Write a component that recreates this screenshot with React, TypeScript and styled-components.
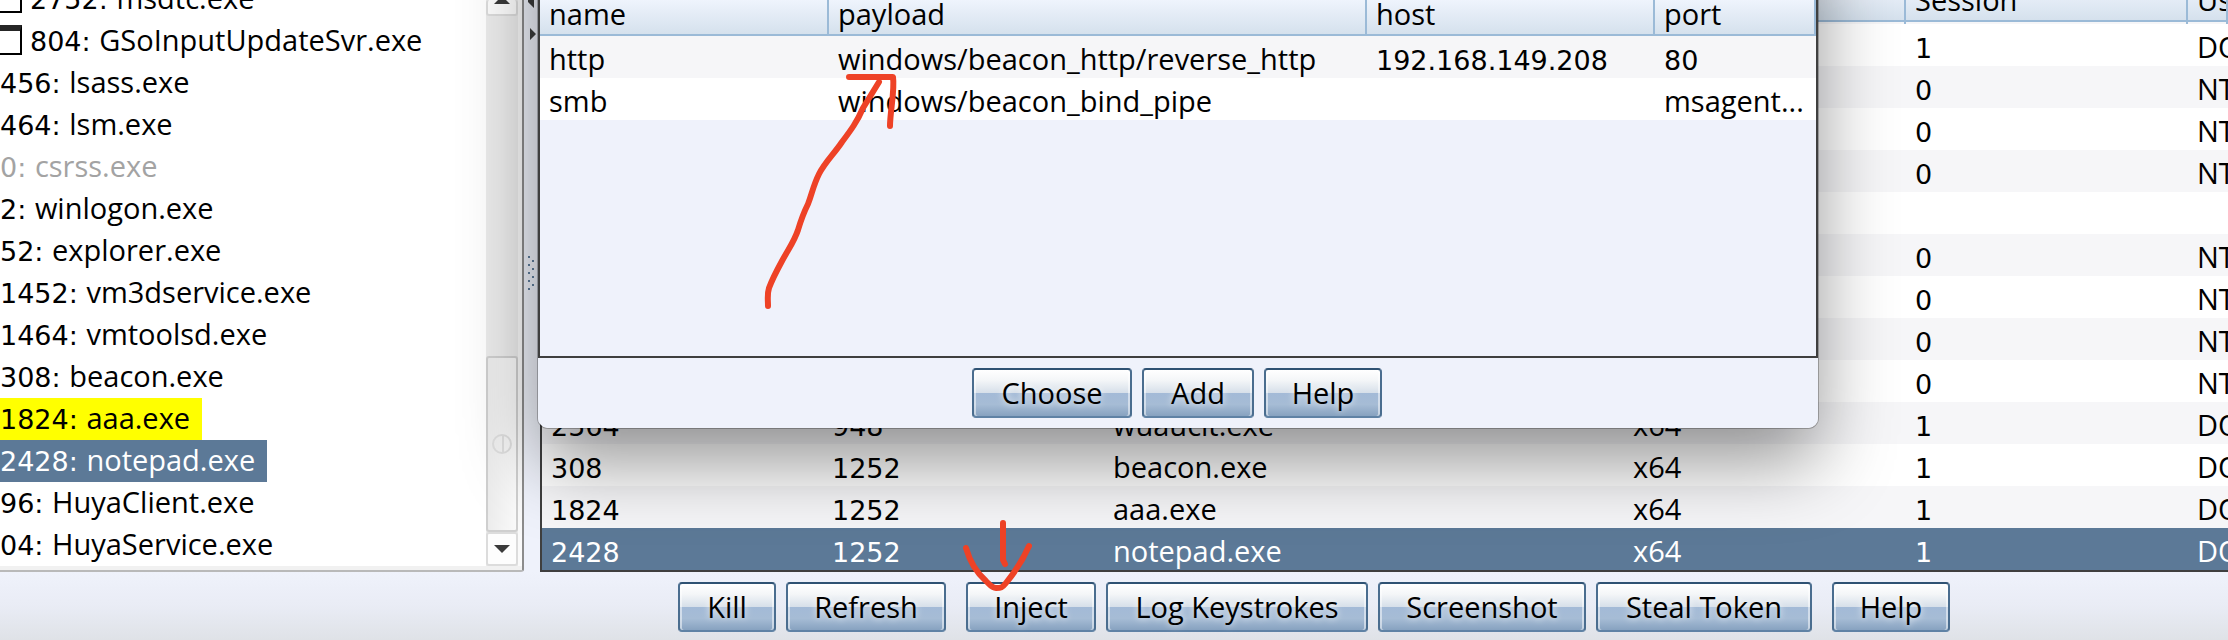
import React from "react";
import styled, { createGlobalStyle, css } from "styled-components";

const textFont = '"Open Sans", "Noto Sans", sans-serif';
const digitFont = '"DejaVu Sans", "Open Sans", sans-serif';

const GlobalStyle = createGlobalStyle`
  *, *::before, *::after { box-sizing: border-box; }
  body {
    margin: 0;
    background: #e0e3e9;
    color: #000;
    font: 29px/40px ${textFont};
    overflow: hidden;
  }
`;

const Page = styled.div`
  position: relative;
  overflow: hidden;
  display: flex;
  flex-direction: column;
  background: #eff2fb;
`;

const Workspace = styled.main`
  display: flex;
`;

/* ---------- process tree ---------- */

const TreePanel = styled.section`
  flex: none;
  width: 524px;
  display: flex;
  background: #fff;
  border-right: 2px solid #8c8c8c;
  border-bottom: 2px solid #b9b9b9;
  border-bottom-right-radius: 3px;
  overflow: hidden;
`;

const TreeList = styled.ul`
  flex: 1;
  margin: -22px 0 0;
  padding: 0;
  list-style: none;
  border-bottom: 4px solid #f1f1f1;
`;

const TreeItem = styled.li<{ $tone?: "marked" | "selected" | "muted" }>`
  display: flex;
  align-items: center;
  width: fit-content;
  height: 42px;
  padding: 0 12px 2px 0;
  white-space: pre;
  ${(p) => p.$tone === "marked" && css`background: #ffff00;`}
  ${(p) => p.$tone === "selected" && css`background: #5c7997; color: #fff;`}
  ${(p) => p.$tone === "muted" && css`color: #a3a3a3;`}
`;

const Digits = styled.span`
  font-family: ${digitFont};
  font-size: 27px;
  line-height: 1;
`;

const WindowIcon = styled.span`
  width: 22px;
  height: 30px;
  margin-right: 8px;
  background: #fff;
  border: 2px solid #000;
  border-top: 6px solid #262626;
  border-left: 0;
`;

const ScrollBar = styled.div`
  flex: none;
  width: 36px;
  display: flex;
  flex-direction: column;
  padding-right: 4px;
  border-bottom: 4px solid #f1f1f1;
  background: linear-gradient(to right, #ececec 0 32px, #fafafa 32px);
`;

const ScrollButton = styled.button<{ $end?: boolean }>`
  flex: none;
  height: ${(p) => (p.$end ? 34 : 16)}px;
  padding: 0;
  display: flex;
  justify-content: center;
  align-items: ${(p) => (p.$end ? "center" : "flex-start")};
  background: #fdfdfd;
  border: 2px solid #dcdcdc;
  border-radius: 3px;
  ${(p) => !p.$end && css`border-top: 0;`}
`;

const ScrollTrack = styled.div`
  flex: 1;
  display: flex;
  flex-direction: column;
  justify-content: flex-end;
`;

const ScrollThumb = styled.div`
  height: 176px;
  display: flex;
  align-items: center;
  justify-content: center;
  border: 2px solid #cfcfcf;
  border-radius: 3px;
  background: linear-gradient(to right, #ececec, #fafafa);
`;

/* ---------- splitter ---------- */

const Splitter = styled.div`
  flex: none;
  width: 16px;
  display: flex;
  justify-content: center;
`;

/* ---------- tables ---------- */

const ProcessPanel = styled.section`
  flex: 1;
  min-width: 0;
  overflow: hidden;
  border: solid #3f3f3f;
  border-width: 0 0 2px 2px;
`;

const Table = styled.table<{ $lift: number }>`
  width: 100%;
  margin-top: -${(p) => p.$lift}px;
  table-layout: fixed;
  border-spacing: 0;
  text-align: left;
`;

const Column = styled.col<{ $width?: number }>`
  width: ${(p) => (p.$width ? `${p.$width}px` : "auto")};
`;

const HeadCell = styled.th<{ $strip?: boolean }>`
  height: ${(p) => (p.$strip ? 44 : 42)}px;
  padding: 0 8px ${(p) => (p.$strip ? 4 : 2)}px 9px;
  font-weight: 400;
  line-height: 40px;
  white-space: nowrap;
  overflow: hidden;
  border-right: 2px solid #9bbad7;
  background: ${(p) =>
    p.$strip
      ? "linear-gradient(to top, #f6f6f8 0 2px, #9bbad7 2px 4px, #d5e1ed 4px, #f3f7ff)"
      : "linear-gradient(to top, #9bbad7 0 2px, #d5e1ed 2px, #f3f7ff)"};
`;

const Row = styled.tr<{ $shaded?: boolean; $selected?: boolean }>`
  background: ${(p) => (p.$selected ? "#5c7997" : p.$shaded ? "#f6f6f8" : "#fff")};
  color: ${(p) => (p.$selected ? "#fff" : "#000")};
`;

const Cell = styled.td`
  height: 42px;
  padding: 4px 0 0 9px;
  line-height: 38px;
  white-space: nowrap;
  overflow: hidden;
`;

/* ---------- buttons ---------- */

const Toolbar = styled.footer`
  display: flex;
  justify-content: center;
  gap: 20px;
  padding: 10px 0 8px 400px;
  background: linear-gradient(#eff2fb, #e9ecf5 50%, #dfe2e7);
`;

const ButtonGroup = styled.div`
  display: flex;
  gap: 10px;
`;

const PushButton = styled.button<{ $width: number }>`
  width: ${(p) => p.$width}px;
  height: 50px;
  padding: 0;
  font: 29px/46px ${textFont};
  color: #000;
  white-space: nowrap;
  text-shadow: 0 0 6px rgba(255, 255, 255, 0.6), 0 0 10px rgba(255, 255, 255, 0.5);
  border: 2px solid;
  border-color: #2f5273 #4a6d8f #5f82a5;
  border-radius: 4px;
  background: linear-gradient(#fff, #f4f6f8 22%, #d6dfe9 50%, #a3bad7 50%, #a6bcd5 75%, #87a2c0);
  box-shadow: inset 2px 0 rgba(255, 255, 255, 0.5), inset -2px 0 rgba(255, 255, 255, 0.5);
`;

/* ---------- listener dialog ---------- */

const Dialog = styled.div`
  position: absolute;
  top: 0;
  left: 538px;
  right: 410px;
  overflow: clip;
  border-radius: 0 0 10px 10px;
  background: #eff2fb;
`;

const DialogShade = styled.div`
  position: absolute;
  top: -100px;
  left: 538px;
  right: 410px;
  height: 528px;
  border-radius: 10px;
  box-shadow: 0 0 0 1px rgba(0, 0, 0, 0.25), 0 34px 76px rgba(0, 0, 0, 0.42);
`;

const ListenerArea = styled.div`
  min-height: 358px;
  overflow: hidden;
  border: solid #3f3f3f;
  border-width: 0 2px 2px;
`;

const DialogActions = styled.div`
  display: flex;
  justify-content: center;
  gap: 10px;
  padding: 10px 2px 10px 0;
`;

const Markup = styled.svg`
  position: absolute;
  top: 0;
  left: 0;
  pointer-events: none;
`;

type Proc = { pid: string; name: string; tone?: "marked" | "selected" | "muted"; windowed?: boolean };

const tree: Proc[] = [
  { pid: "2752", name: "msdtc.exe", windowed: true },
  { pid: "804", name: "GSoInputUpdateSvr.exe", windowed: true },
  { pid: "456", name: "lsass.exe" },
  { pid: "464", name: "lsm.exe" },
  { pid: "0", name: "csrss.exe", tone: "muted" },
  { pid: "2", name: "winlogon.exe" },
  { pid: "52", name: "explorer.exe" },
  { pid: "1452", name: "vm3dservice.exe" },
  { pid: "1464", name: "vmtoolsd.exe" },
  { pid: "308", name: "beacon.exe" },
  { pid: "1824", name: "aaa.exe", tone: "marked" },
  { pid: "2428", name: "notepad.exe", tone: "selected" },
  { pid: "96", name: "HuyaClient.exe" },
  { pid: "04", name: "HuyaService.exe" },
];

const processes: string[][] = [
  ["", "", "", "", "1", "DO"],
  ["", "", "", "", "0", "NT"],
  ["", "", "", "", "0", "NT"],
  ["", "", "", "", "0", "NT"],
  ["", "", "", "", "", ""],
  ["", "", "", "", "0", "NT"],
  ["", "", "", "", "0", "NT"],
  ["", "", "", "", "0", "NT"],
  ["", "", "", "", "0", "NT"],
  ["2564", "948", "wuauclt.exe", "x64", "1", "DO"],
  ["308", "1252", "beacon.exe", "x64", "1", "DO"],
  ["1824", "1252", "aaa.exe", "x64", "1", "DO"],
  ["2428", "1252", "notepad.exe", "x64", "1", "DO"],
];

const listeners = [
  ["http", "windows/beacon_http/reverse_http", "192.168.149.208", "80"],
  ["smb", "windows/beacon_bind_pipe", "", "msagent..."],
];

const actions: [string, number][][] = [
  [["Kill", 98], ["Refresh", 160]],
  [["Inject", 130], ["Log Keystrokes", 262], ["Screenshot", 208], ["Steal Token", 216]],
  [["Help", 118]],
];

const Value = ({ text }: { text: string }) =>
  /^[\d.]+$/.test(text) ? <Digits>{text}</Digits> : <>{text}</>;

export default function App() {
  return (
    <>
      <GlobalStyle />
      <Page>
        <Workspace>
          <TreePanel>
            <TreeList>
              {tree.map((p) => (
                <TreeItem key={p.pid} $tone={p.tone}>
                  {p.windowed && <WindowIcon />}
                  <span>
                    <Digits>{p.pid}: </Digits>
                    {p.name}
                  </span>
                </TreeItem>
              ))}
            </TreeList>
            <ScrollBar>
              <ScrollButton aria-label="Scroll up">
                <svg width="16" height="4" viewBox="0 0 16 4">
                  <path d="M4 0h8l4 4H0z" fill="#3a3a3a" />
                </svg>
              </ScrollButton>
              <ScrollTrack>
                <ScrollThumb>
                  <svg width="20" height="20" viewBox="0 0 20 20" fill="none" stroke="#dedede" strokeWidth="2">
                    <circle cx="10" cy="10" r="9" />
                    <path d="M11 2v16" />
                  </svg>
                </ScrollThumb>
              </ScrollTrack>
              <ScrollButton $end aria-label="Scroll down">
                <svg width="16" height="8" viewBox="0 0 16 8">
                  <path d="M0 0h16L8 8z" fill="#3a3a3a" />
                </svg>
              </ScrollButton>
            </ScrollBar>
          </TreePanel>

          <Splitter>
            <svg width="16" height="300" viewBox="0 0 16 300">
              <path d="M10 0v8L4 2V0zM6 28v12l6-6z" fill="#3c3c3c" />
              {[0, 1, 2, 3, 4].map((i) => (
                <g key={i} fill="#5f7d9c">
                  <rect x="4" y={256 + i * 8} width="2" height="2" />
                  {i < 4 && <rect x="8" y={260 + i * 8} width="2" height="2" />}
                </g>
              ))}
            </svg>
          </Splitter>

          <ProcessPanel>
            <Table $lift={20}>
              <colgroup>
                <Column $width={281} />
                <Column $width={281} />
                <Column />
                <Column $width={282} />
                <Column $width={282} />
                <Column $width={40} />
              </colgroup>
              <thead>
                <tr>
                  <HeadCell $strip />
                  <HeadCell $strip />
                  <HeadCell $strip />
                  <HeadCell $strip />
                  <HeadCell $strip>Session</HeadCell>
                  <HeadCell $strip>Us</HeadCell>
                </tr>
              </thead>
              <tbody>
                {processes.map((cells, i) => (
                  <Row key={i} $shaded={i % 2 === 1} $selected={cells[0] === "2428"}>
                    {cells.map((c, j) => (
                      <Cell key={j}>
                        <Value text={c} />
                      </Cell>
                    ))}
                  </Row>
                ))}
              </tbody>
            </Table>
          </ProcessPanel>
        </Workspace>

        <Toolbar>
          {actions.map((group, i) => (
            <ButtonGroup key={i}>
              {group.map(([label, width]) => (
                <PushButton key={label} $width={width}>{label}</PushButton>
              ))}
            </ButtonGroup>
          ))}
        </Toolbar>

        <DialogShade />
        <Dialog role="dialog" aria-label="Choose a payload">
          <ListenerArea>
            <Table $lift={6}>
              <colgroup>
                <Column $width={289} />
                <Column />
                <Column $width={288} />
                <Column $width={161} />
              </colgroup>
              <thead>
                <tr>
                  {["name", "payload", "host", "port"].map((h) => (
                    <HeadCell key={h}>{h}</HeadCell>
                  ))}
                </tr>
              </thead>
              <tbody>
                {listeners.map((cells, i) => (
                  <Row key={cells[0]} $shaded={i % 2 === 0}>
                    {cells.map((c, j) => (
                      <Cell key={j}>
                        <Value text={c} />
                      </Cell>
                    ))}
                  </Row>
                ))}
              </tbody>
            </Table>
          </ListenerArea>
          <DialogActions>
            <PushButton $width={160}>Choose</PushButton>
            <PushButton $width={112}>Add</PushButton>
            <PushButton $width={118}>Help</PushButton>
          </DialogActions>
        </Dialog>

        <Markup
          width="1100"
          height="640"
          viewBox="0 0 1100 640"
          fill="none"
          stroke="#ee4226"
          strokeWidth="6"
          strokeLinecap="round"
          strokeLinejoin="round"
        >
          <path d="M849 77H893C895 90 890 112 890 126" />
          <path d="M879 82L863 108C857 122 851 130 842 142C834 154 825 162 819 174C813 186 812 194 808 204C803 214 801 220 798 230C794 242 789 248 782 261C776 272 772 280 769 288C767 294 768 300 768 306" />
          <path d="M1003 523V560L1005 564" />
          <path d="M966 548C970 562 978 574 986 581C990 585 992 588 996 588C1001 588 1002 588 1006 583C1015 572 1022 562 1029 546" />
        </Markup>
      </Page>
    </>
  );
}
